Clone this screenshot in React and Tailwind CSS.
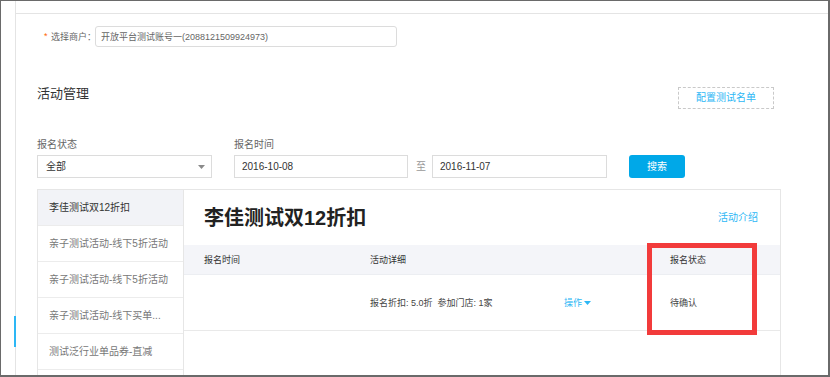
import React from "react";

const items = [
  "李佳测试双12折扣",
  "亲子测试活动-线下5折活动",
  "亲子测试活动-线下5折活动",
  "亲子测试活动-线下买单...",
  "测试泛行业单品券-直减",
  "",
];

function Caret({ color, w = 7, h = 4 }) {
  return (
    <svg width={w} height={h} viewBox="0 0 7 4" className="shrink-0">
      <path d="M0 0 L7 0 L3.5 4 Z" fill={color} />
    </svg>
  );
}

export default function App() {
  return (
    <div className="w-[830px] h-[377px] overflow-hidden bg-white font-['Liberation_Sans','Noto_Sans_CJK_SC',sans-serif]">
      <div className="flex h-full border-l border-t border-r-2 border-b-2 border-[#6a6a6a]">
        {/* side strip */}
        <div className="w-[15px] shrink-0 border-r border-[#e4e4e4] flex flex-col">
          <div className="mt-[315px] h-[31px] w-[2px] self-end translate-x-[1px] bg-[#2db7f5]" />
        </div>

        <div className="flex-1 flex flex-col min-w-0">
          <div className="h-[12px] shrink-0" />
          <div className="flex-1 border-t border-[#e4e4e4] pl-[21px] min-h-0">
            <div className="w-[744px] flex flex-col h-full">
              {/* merchant */}
              <div className="mt-[12px] h-[21px] flex items-center pl-[7px]">
                <span className="w-[7px] shrink-0 text-[9px] leading-[9px] text-[#f60]">*</span>
                <span className="w-[44px] shrink-0 whitespace-nowrap text-[9px] leading-[10px] text-[#666]">选择商户：</span>
                <div className="w-[302px] shrink-0 h-[21px] border border-[#dcdcdc] rounded-[3px] px-[5px] flex items-center whitespace-nowrap text-[9px] leading-[10px] text-[#666]">
                  开放平台测试账号一(2088121509924973)
                </div>
              </div>

              {/* heading */}
              <div className="mt-[40px] h-[22px] flex justify-between items-start">
                <span className="text-[13px] leading-[14px] text-[#333]">活动管理</span>
                <button className="mr-[7px] w-[96px] h-[22px] border border-dashed border-[#c9c9c9] flex items-center justify-center text-[10px] leading-[10px] text-[#2db7f5]">
                  配置测试名单
                </button>
              </div>

              {/* filters */}
              <div className="mt-[30px] flex items-end">
                <div className="w-[175px] flex flex-col">
                  <span className="h-[12px] mb-[4px] text-[10px] leading-[12px] text-[#666]">报名状态</span>
                  <div className="h-[23px] border border-[#dcdcdc] flex items-center justify-between pl-[8px] pr-[6px] text-[10px] leading-[10px] text-[#333]">
                    <span>全部</span>
                    <Caret color="#8a8a8a" />
                  </div>
                </div>
                <div className="ml-[22px] flex flex-col">
                  <span className="h-[12px] mb-[4px] text-[10px] leading-[12px] text-[#666]">报名时间</span>
                  <div className="flex items-center">
                    <div className="w-[174px] h-[23px] border border-[#dcdcdc] flex items-center pl-[7px] text-[10px] leading-[10px] text-[#333]">
                      2016-10-08
                    </div>
                    <span className="ml-[8px] mr-[6px] w-[10px] shrink-0 text-[10px] leading-[10px] text-[#999]">至</span>
                    <div className="w-[175px] h-[23px] border border-[#dcdcdc] flex items-center pl-[7px] text-[10px] leading-[10px] text-[#333]">
                      2016-11-07
                    </div>
                  </div>
                </div>
                <button className="ml-[22px] w-[56px] h-[23px] rounded-[3px] bg-[#00a8e8] text-white text-[10px] leading-[10px] flex items-center justify-center">
                  搜索
                </button>
              </div>

              {/* panel */}
              <div className="mt-[11px] flex-1 flex border-l border-t border-r border-[#e6e6e6] min-h-0">
                <div className="w-[146px] shrink-0 border-r border-[#e6e6e6] flex flex-col">
                  {items.map((t, i) => (
                    <div
                      key={i}
                      className={`h-[36px] shrink-0 border-b border-[#ececec] flex items-center pl-[11px] text-[10px] leading-[12px] ${
                        i === 0 ? "bg-[#f2f3f7] text-[#333]" : "text-[#777]"
                      }`}
                    >
                      {t}
                    </div>
                  ))}
                </div>

                <div className="flex-1 relative flex flex-col">
                  <div className="h-[55px] flex items-center justify-between pl-[20px] pr-[22px]">
                    <span className="text-[20px] leading-[22px] font-bold text-[#222]">李佳测试双12折扣</span>
                    <span className="text-[10px] leading-[10px] text-[#2db7f5]">活动介绍</span>
                  </div>
                  <div className="h-[30px] bg-[#f4f5f9] border-b border-[#eceef2] grid grid-cols-[166px_194px_106px_1fr] items-center pl-[20px] text-[9px] leading-[10px] text-[#333]">
                    <span>报名时间</span>
                    <span>活动详细</span>
                    <span />
                    <span>报名状态</span>
                  </div>
                  <div className="h-[56px] border-b border-[#e9e9e9] grid grid-cols-[166px_194px_106px_1fr] items-center pl-[20px] text-[9px] leading-[10px] text-[#444]">
                    <span />
                    <span>报名折扣: 5.0折&nbsp;&nbsp;参加门店: 1家</span>
                    <span className="flex items-center gap-[2px] text-[#2db7f5]">
                      操作
                      <Caret color="#2db7f5" w={7} h={4} />
                    </span>
                    <span>待确认</span>
                  </div>

                  {/* annotation */}
                  <div className="absolute top-[53px] left-[463px] w-[110px] h-[92px] border-[5px] border-[#f23b3b]" />
                </div>
              </div>
            </div>
          </div>
        </div>
      </div>
    </div>
  );
}
